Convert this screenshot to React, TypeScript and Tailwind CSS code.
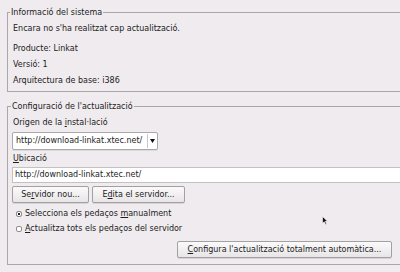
const btn =
  "h-[17px] flex items-center justify-center rounded-[2px] border border-[#a3a0a2] bg-gradient-to-b from-[#fbfafb] to-[#e8e5e7] shadow-[0_1px_0_#d6d2d5] leading-none";

function U({ children }: { children: React.ReactNode }) {
  return <span className="underline underline-offset-[1px]">{children}</span>;
}

function Radio({ checked }: { checked?: boolean }) {
  return (
    <svg width="6" height="6" viewBox="0 0 6 6" className="mr-[3px] shrink-0">
      <rect x="0.5" y="0.5" width="5" height="5" rx="1.5" fill="#fff" stroke="#8f8c8e" strokeWidth="1" />
      {checked && <path d="M1.8 1.8 L4.2 4.2 M4.2 1.8 L1.8 4.2" stroke="#222" strokeWidth="1" />}
    </svg>
  );
}

export default function App() {
  return (
    <div className="relative w-[400px] h-[272px] overflow-hidden bg-[#efebee] pl-[7px] pt-[7px] font-['DejaVu_Sans',sans-serif] text-[8px] text-[#1c1c1c]">
      <fieldset className="w-[410px] border border-[#aaa7a9] px-[5px] pb-[2px]">
        <legend className="ml-[-3px] px-[1px] leading-[11px]">Informació del sistema</legend>
        <div className="pt-[3px] leading-[16px]">
          <p>Encara no s'ha realitzat cap actualització.</p>
          <p className="mt-[4px]">Producte: Linkat</p>
          <p>Versió: 1</p>
          <p>Arquitectura de base: i386</p>
        </div>
      </fieldset>

      <fieldset className="mt-[9px] w-[410px] border border-[#aaa7a9] pl-[4px] pb-[6px]">
        <legend className="ml-[-1px] px-[1px] leading-[11px]">Configuració de l'actualització</legend>
        <div className="flex flex-col pt-[3px]">
          <p className="pl-[1px] leading-[16px]">
            Origen de la <U>i</U>nstal·lació
          </p>
          <div className="mt-[1px] flex h-[18px] w-[146px] items-center rounded-[2px] border border-[#aba8aa] bg-white shadow-[0_1px_0_#dcd8db]">
            <span className="flex-1 pl-[3px] leading-none">http://download-linkat.xtec.net/</span>
            <div className="flex h-[14px] w-[10px] items-center justify-center border-l border-[#c9c6c8]">
              <svg width="5" height="4" viewBox="0 0 5 4">
                <path d="M0 0 H5 L2.5 4 Z" fill="#111" />
              </svg>
            </div>
          </div>
          <p className="mt-[1px] pl-[1px] leading-[16px]">
            <U>U</U>bicació
          </p>
          <div className="flex h-[16px] items-center border border-[#c4c1c3] bg-white pl-[2px] leading-none">
            http://download-linkat.xtec.net/
          </div>
          <div className="mt-[3px] flex gap-[3px]">
            <div className={`${btn} w-[77px]`}>
              Se<U>r</U>vidor nou...
            </div>
            <div className={`${btn} w-[93px]`}>
              E<U>d</U>ita el servidor...
            </div>
          </div>
          <div className="mt-[3px] flex items-center pl-[4px] leading-[15px]">
            <Radio checked />
            <span>
              Selecciona els pedaços <U>m</U>anualment
            </span>
          </div>
          <div className="flex items-center pl-[4px] leading-[15px]">
            <Radio />
            <span>
              <U>A</U>ctualitza tots els pedaços del servidor
            </span>
          </div>
          <div className={`${btn} mt-[5px] ml-[165px] w-[215px]`}>
            <U>C</U>onfigura l'actualització totalment automàtica...
          </div>
        </div>
      </fieldset>

      <svg width="6" height="9" viewBox="0 0 6 9" className="absolute left-[322px] top-[216px]">
        <path d="M0.5 0.5 V7.5 L2.2 5.8 L3.6 8.5 L4.6 8 L3.3 5.3 H5.5 Z" fill="#111" stroke="#fff" strokeWidth="0.6" />
      </svg>
    </div>
  );
}
